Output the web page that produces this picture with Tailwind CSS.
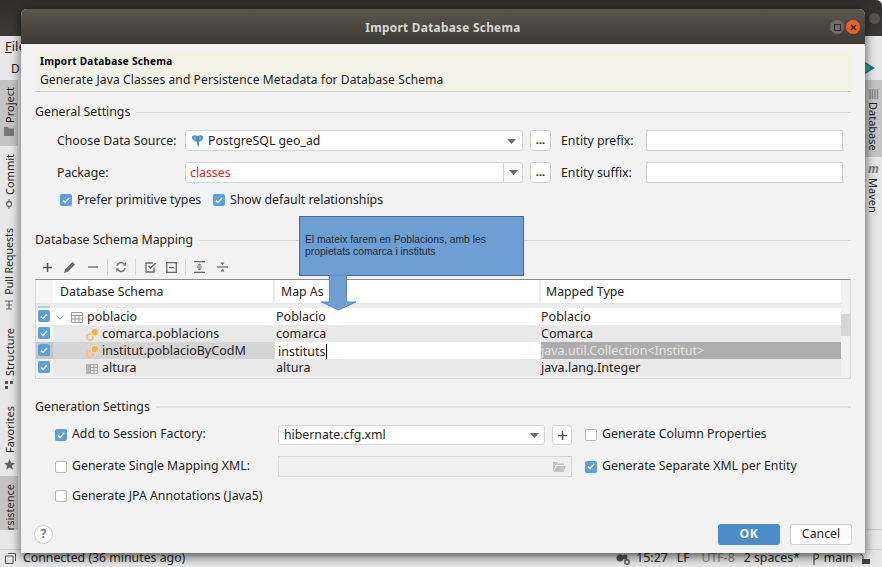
<!DOCTYPE html>
<html lang="en">
<head>
    <meta charset="UTF-8">
    <title>Import Database Schema</title>
    <script src="https://cdn.jsdelivr.net/npm/@tailwindcss/browser@4"></script>
</head>
<body class="bg-[#f2f2f2] overflow-hidden">
<div class="relative w-[882px] h-[567px] overflow-hidden font-['Noto_Sans',sans-serif] text-[12.3px] text-[#222] flex flex-col">

    <!-- IDE window behind the dialog -->
    <div class="h-[36px] bg-gradient-to-b from-[#2f2e2a] to-[#3c3b37] shrink-0 rounded-tr-[6px] flex justify-end items-start">
        <div class="mt-[13px] mr-[2px] w-[11px] h-[11px] rounded-full bg-[#55544f]"></div>
    </div>
    <div class="flex-1 flex min-h-0">
        <!-- left tool strip -->
        <div class="w-[18px] bg-[#e8e8e8] flex flex-col text-[11px] shrink-0">
            <div class="h-[24px] text-[13px] pl-[5px] pt-px whitespace-nowrap"><span class="underline">F</span>ile</div>
            <div class="h-[20px] pl-[11px] text-[12px]">D</div>
            <div class="h-[66px] bg-[#c4c4c4] flex flex-col items-center pt-[7px] gap-[4px]">
                <span class="[writing-mode:vertical-rl] rotate-180 leading-none">Project</span>
                <svg width="10" height="9" viewBox="0 0 10 9"><path d="M0 0h4l1 1.500h5V9H0z" fill="#777"/></svg>
            </div>
            <div class="h-[81px] flex flex-col items-center pt-[8px] gap-[4px]">
                <span class="[writing-mode:vertical-rl] rotate-180 leading-none">Commit</span>
                <svg width="10" height="10" viewBox="0 0 10 10"><circle cx="5" cy="5" r="2.500" fill="none" stroke="#666" stroke-width="1.300"/><path d="M5 0v2.500M5 7.500V10" stroke="#666"/></svg>
            </div>
            <div class="h-[98px] flex flex-col items-center pt-[1px] gap-[5px]">
                <span class="[writing-mode:vertical-rl] rotate-180 leading-none text-[10.600px]">Pull Requests</span>
                <svg width="10" height="10" viewBox="0 0 10 10"><path d="M1 1h8M5 1v8M2 5h6M2 9h6" stroke="#666" stroke-width="1.200"/></svg>
            </div>
            <div class="h-[78px] flex flex-col items-center pt-[3px] gap-[5px]">
                <span class="[writing-mode:vertical-rl] rotate-180 leading-none">Structure</span>
                <svg width="10" height="8" viewBox="0 0 10 8"><path d="M1 0h3v3H1zM6 0h3v3H6zM1 5h3v3H1z" fill="#555"/></svg>
            </div>
            <div class="h-[73px] flex flex-col items-center pt-[3px] gap-[6px]">
                <span class="[writing-mode:vertical-rl] rotate-180 leading-none">Favorites</span>
                <svg width="11" height="11" viewBox="0 0 11 11"><path d="M5.500 0l1.600 3.700 3.900.4-3 2.600.9 4-3.400-2.100L2.100 10.700l.9-4-3-2.600 3.900-.4z" fill="#666"/></svg>
            </div>
            <div class="h-[54px] bg-[#c4c4c4] flex flex-col justify-end items-center overflow-hidden">
                <span class="[writing-mode:vertical-rl] rotate-180 leading-none">rsistence</span>
            </div>
        </div>
        <div class="flex-1"></div>
        <!-- right tool strip -->
        <div class="w-[17px] bg-[#e8e8e8] flex flex-col text-[11px] shrink-0">
            <div class="h-[44px] flex items-end pb-[6px]">
                <svg width="10" height="12" viewBox="0 0 10 12"><path d="M0 0l10 6-10 6z" fill="#1c6fa8"/><path d="M0 0l5 6-5 6z" fill="#3fae6a"/></svg>
            </div>
            <div class="h-[77px] bg-[#c4c4c4] flex flex-col items-center pt-[9px] gap-[3px]">
                <svg width="10" height="10" viewBox="0 0 10 10"><path d="M1 0v10M3.500 0v10M6 0v10M8.500 0v10" stroke="#888" stroke-width="1.500"/></svg>
                <span class="[writing-mode:vertical-rl] leading-none">Database</span>
            </div>
            <div class="flex flex-col items-center pt-[6px] gap-[3px]">
                <span class="italic font-bold text-[12px] leading-none text-[#777]">m</span>
                <span class="[writing-mode:vertical-rl] leading-none">Maven</span>
            </div>
            <div class="mt-auto mb-[19px] h-px bg-[#cfcfcf]"></div>
        </div>
    </div>
    <!-- status bar -->
    <div class="h-[18px] bg-[#e8e8e8] border-t border-[#cfcfcf] shrink-0 flex items-center">
        <svg width="11" height="11" viewBox="0 0 11 11" class="ml-[5px] mr-[7px]"><path d="M3 .5h7.500v7.500M.5 3h7.500v7.500H.5z" fill="none" stroke="#555"/></svg>
        <span>Connected (36 minutes ago)</span>
        <div class="ml-auto flex items-center mr-[12px]">
            <svg width="14" height="12" viewBox="0 0 14 12"><circle cx="4" cy="5" r="3.500" fill="#555"/><circle cx="9" cy="4" r="2.500" fill="#555"/><circle cx="11" cy="9" r="2.200" fill="none" stroke="#555" stroke-width="1.400"/></svg>
            <span class="ml-[6px]">15:27</span>
            <span class="ml-[9px]">LF</span>
            <span class="ml-[12px] text-[#888]">UTF-8</span>
            <span class="ml-[9px]">2 spaces*</span>
            <svg width="8" height="12" viewBox="0 0 8 12" class="ml-[11px]"><path d="M3 12V1M3 1h2.500a2 2 0 0 1 0 4.500L3 7" fill="none" stroke="#555" stroke-width="1.200"/></svg>
            <span class="ml-[5px]">main</span>
            <svg width="10" height="10" viewBox="0 0 10 10" class="ml-[7px]"><path d="M2 5h8v5H2z" fill="#444"/><path d="M3 5V2.500a2 2 0 0 0-3-1.500" fill="none" stroke="#444"/></svg>
        </div>
    </div>

    <!-- dialog -->
    <div class="absolute left-[21px] top-[9px] w-[844px] h-[544px] bg-[#f2f2f2] rounded-t-[6px] shadow-[0_3px_11px_rgba(0,0,0,0.7)] flex flex-col">
        <div class="h-[35px] bg-gradient-to-b from-[#5a574e] to-[#3d3b36] rounded-t-[6px] relative flex items-center justify-center pt-[3px] shrink-0 border-b border-[#33322e]">
            <span class="text-[#d9d8d2] font-bold text-[11.800px] tracking-[0.3px]">Import Database Schema</span>
            <div class="absolute right-[5px] top-[11px] flex gap-[2px]">
                <div class="w-[14px] h-[14px] rounded-full bg-[#6e6d66] flex items-center justify-center"><div class="w-[7px] h-[7px] border border-[#2e2d2a]"></div></div>
                <div class="w-[14px] h-[14px] rounded-full bg-[#e9602c] text-[#3a2015] flex items-center justify-center">
                    <svg width="7" height="7" viewBox="0 0 7 7"><path d="M1 1l5 5M6 1L1 6" stroke="#402015" stroke-width="1.400"/></svg>
                </div>
            </div>
        </div>

        <div class="flex-1 flex flex-col px-[14px]">
            <!-- banner -->
            <div class="mt-[7px] h-[41px] bg-[#f2f2e6] border-b border-[#cfcfcf] px-[5px] pt-[4px] shrink-0">
                <div class="text-[10px] font-bold leading-[13px] tracking-[0.3px] text-black">Import Database Schema</div>
                <div class="mt-[2px] text-[12px] leading-[20px] tracking-[0.12px]">Generate Java Classes and Persistence Metadata for Database Schema</div>
            </div>

            <!-- general settings -->
            <div class="mt-[12px] h-[16px] flex items-center gap-[6px] shrink-0">
                <span>General Settings</span>
                <div class="flex-1 h-px bg-[#d8d8d8]"></div>
            </div>
            <div class="mt-[10px] h-[21px] flex items-center pl-[22px] shrink-0">
                <span class="w-[128px] pt-[2px]">Choose Data Source:</span>
                <div class="w-[338px] h-[21px] bg-white border border-[#d6d6d6] rounded-[3px] flex items-center pl-[6px] pr-[6px] pt-px">
                    <svg width="11" height="12" viewBox="0 0 11 12" class="mr-[5px]"><path d="M0 2.500C0 .5 2.500 0 3.500.5L5.500 1l2-.5c1-.5 3.500 0 3.500 2 0 2-1.500 3.500-2.500 4H7v4c0 1-1.200 1.500-1.500.5L5 6.500H3.500C2 6 0 4.500 0 2.500z" fill="#3d8fc4"/><path d="M3 1.500v4M8 1.500v4" stroke="#bfe0f5" stroke-width=".8"/></svg>
                    <span>PostgreSQL geo_ad</span>
                    <svg width="9" height="5" viewBox="0 0 9 5" class="ml-auto"><path d="M0 0h9L4.500 5z" fill="#6b6b6b"/></svg>
                </div>
                <div class="ml-[7px] w-[21px] h-[21px] bg-white border border-[#d0d0d0] rounded-[3px] flex items-center justify-center text-[11px] font-bold pb-[1px]">...</div>
                <span class="ml-[10px] w-[85px] pt-[2px]">Entity prefix:</span>
                <div class="w-[197px] h-[21px] bg-white border border-[#d0d0d0]"></div>
            </div>
            <div class="mt-[11px] h-[21px] flex items-center pl-[22px] shrink-0">
                <span class="w-[128px] pt-[2px]">Package:</span>
                <div class="w-[338px] h-[21px] bg-white border border-[#d6d6d6] rounded-[3px] flex items-center pl-[4px]">
                    <span class="text-[#e8212b] pt-px">classes</span>
                    <div class="ml-auto w-[19px] h-full border-l border-[#d6d6d6] bg-[#f8f8f8] rounded-r-[3px] flex items-center justify-center">
                        <svg width="9" height="5" viewBox="0 0 9 5"><path d="M0 0h9L4.500 5z" fill="#6b6b6b"/></svg>
                    </div>
                </div>
                <div class="ml-[7px] w-[21px] h-[21px] bg-white border border-[#d0d0d0] rounded-[3px] flex items-center justify-center text-[11px] font-bold pb-[1px]">...</div>
                <span class="ml-[10px] w-[85px] pt-[2px]">Entity suffix:</span>
                <div class="w-[197px] h-[21px] bg-white border border-[#d0d0d0]"></div>
            </div>
            <div class="mt-[9px] h-[16px] flex items-center pl-[25px] shrink-0">
                <div class="w-[12px] h-[12px] rounded-[2px] bg-[#5b9fdf] flex items-center justify-center"><svg width="8" height="7" viewBox="0 0 8 7"><path d="M1 3.500l2 2L7 1" fill="none" stroke="#fff" stroke-width="1.500"/></svg></div>
                <span class="ml-[5px] w-[136px]">Prefer primitive types</span>
                <div class="w-[12px] h-[12px] rounded-[2px] bg-[#5b9fdf] flex items-center justify-center"><svg width="8" height="7" viewBox="0 0 8 7"><path d="M1 3.500l2 2L7 1" fill="none" stroke="#fff" stroke-width="1.500"/></svg></div>
                <span class="ml-[5px]">Show default relationships</span>
            </div>

            <!-- mapping -->
            <div class="mt-[24px] h-[16px] flex items-center gap-[6px] shrink-0">
                <span>Database Schema Mapping</span>
                <div class="flex-1 h-px bg-[#d8d8d8]"></div>
            </div>
            <div class="mt-[10px] h-[18px] flex items-center pl-[7px] shrink-0">
                <svg width="11" height="11" viewBox="0 0 11 11"><path d="M5.500 1v9M1 5.500h9" stroke="#555" stroke-width="1.500"/></svg>
                <svg width="12" height="12" viewBox="0 0 12 12" class="ml-[11px]"><path d="M0 12l1-3.500L8.500 1 11 3.500 3.500 11z" fill="#666"/></svg>
                <svg width="10" height="2" viewBox="0 0 10 2" class="ml-[12px]"><path d="M0 1h10" stroke="#666" stroke-width="1.300"/></svg>
                <div class="ml-[9px] w-px h-[16px] bg-[#d4d4d4]"></div>
                <svg width="12" height="12" viewBox="0 0 12 12" class="ml-[7px]"><path d="M2 5a4 4 0 0 1 7-2M10 7a4 4 0 0 1-7 2" fill="none" stroke="#777" stroke-width="1.600"/><path d="M7.500 4.500H11V1zM4.500 7.500H1V11z" fill="#777"/></svg>
                <div class="ml-[8px] w-px h-[16px] bg-[#d4d4d4]"></div>
                <svg width="12" height="11" viewBox="0 0 12 11" class="ml-[9px]"><path d="M9 5.500V10H1V1h7" fill="none" stroke="#666" stroke-width="1.300"/><path d="M3.500 4l2 2L11 1" fill="none" stroke="#666" stroke-width="1.300"/></svg>
                <svg width="11" height="11" viewBox="0 0 11 11" class="ml-[9px]"><path d="M.7.700h9.600v9.600H.7z" fill="none" stroke="#666" stroke-width="1.300"/><path d="M3 5.500h5" stroke="#666" stroke-width="1.300"/></svg>
                <div class="ml-[8px] w-px h-[16px] bg-[#d4d4d4]"></div>
                <svg width="11" height="12" viewBox="0 0 11 12" class="ml-[8px]"><path d="M0 .7h11M0 11.300h11M3 6h5" stroke="#666" stroke-width="1.200"/><path d="M5.500 2.500L7.500 4.500h-4zM5.500 9.500L3.500 7.500h4z" fill="#666"/></svg>
                <svg width="11" height="12" viewBox="0 0 11 12" class="ml-[12px]"><path d="M0 6h11" stroke="#666" stroke-width="1.200"/><path d="M5.500 4.500L3.500 1.500h4zM5.500 7.500L7.500 10.500h-4z" fill="#666"/></svg>
            </div>

            <!-- table -->
            <div class="mt-[3px] h-[100px] border border-[#d8d8d8] border-t-[#8c8c8c] flex shrink-0 text-[12.500px]">
                <div class="flex-1 min-w-0 flex flex-col">
                    <div class="h-[24px] flex bg-white border-b border-[#e8e8e8] text-[12.300px] shrink-0 [&>div]:pt-[2px]">
                        <div class="w-[17px] bg-[#f5f5f5]"></div>
                        <div class="w-[222px] flex items-center pl-[7px] border-r-2 border-[#ececec]">Database Schema</div>
                        <div class="w-[266px] flex items-center pl-[6px] border-r-2 border-[#ececec]">Map As</div>
                        <div class="flex-1 flex items-center pl-[5px]">Mapped Type</div>
                    </div>
                    <div class="h-[4px] bg-[#ececec] shrink-0 pl-[2px]"><div class="w-[12px] h-[2px] mt-[2px] bg-[#a8c9ea]"></div></div>
                    <div class="h-[17px] flex bg-white shrink-0 [&>div]:pt-[2px]">
                        <div class="w-[17px] pl-[2px]"><div class="w-[12px] h-[12px] rounded-[2px] bg-[#5b9fdf] flex items-center justify-center"><svg width="8" height="7" viewBox="0 0 8 7"><path d="M1 3.500l2 2L7 1" fill="none" stroke="#fff" stroke-width="1.500"/></svg></div></div>
                        <div class="w-[222px] flex items-center">
                            <svg width="8" height="5" viewBox="0 0 8 5" class="ml-[3px]"><path d="M.5.500L4 4 7.500.500" fill="none" stroke="#888"/></svg>
                            <svg width="12" height="11" viewBox="0 0 12 11" class="ml-[7px]"><path d="M.5.500h11v10H.5zM.5 3.500h11M.5 7h11M4 3.500v7M8 3.500v7" fill="none" stroke="#9a9a9a"/></svg>
                            <span class="ml-[4px]">poblacio</span>
                        </div>
                        <div class="w-[266px] flex items-center pl-[1px]">Poblacio</div>
                        <div class="flex-1 flex items-center">Poblacio</div>
                    </div>
                    <div class="h-[17px] flex bg-[#e9e9e9] shrink-0 [&>div]:pt-[2px]">
                        <div class="w-[17px] bg-[#f2f2f2] pl-[2px]"><div class="w-[12px] h-[12px] rounded-[2px] bg-[#5b9fdf] flex items-center justify-center"><svg width="8" height="7" viewBox="0 0 8 7"><path d="M1 3.500l2 2L7 1" fill="none" stroke="#fff" stroke-width="1.500"/></svg></div></div>
                        <div class="w-[222px] flex items-center pl-[33px]">
                            <svg width="13" height="13" viewBox="0 0 13 13"><circle cx="4" cy="9" r="3.100" fill="none" stroke="#f5c47a" stroke-width="1.900"/><circle cx="8.800" cy="4.200" r="3.800" fill="#f2b04e" stroke="#f4f4f4" stroke-width=".7"/></svg>
                            <span class="ml-[3px]">comarca.poblacions</span>
                        </div>
                        <div class="w-[266px] flex items-center pl-[1px]">comarca</div>
                        <div class="flex-1 flex items-center">Comarca</div>
                    </div>
                    <div class="h-[17px] flex bg-[#d4d4d4] shrink-0 [&>div]:pt-[2px]">
                        <div class="w-[17px] bg-[#c6c6c6] pl-[2px]"><div class="w-[12px] h-[12px] rounded-[2px] bg-[#5b9fdf] flex items-center justify-center"><svg width="8" height="7" viewBox="0 0 8 7"><path d="M1 3.500l2 2L7 1" fill="none" stroke="#fff" stroke-width="1.500"/></svg></div></div>
                        <div class="w-[222px] flex items-center pl-[33px]">
                            <svg width="13" height="13" viewBox="0 0 13 13"><circle cx="4" cy="9" r="3.100" fill="none" stroke="#f5c47a" stroke-width="1.900"/><circle cx="8.800" cy="4.200" r="3.800" fill="#f2b04e" stroke="#f4f4f4" stroke-width=".7"/></svg>
                            <span class="ml-[3px]">institut.poblacioByCodM</span>
                        </div>
                        <div class="w-[266px] flex items-center pl-[3px] bg-white"><span class="border-r border-black leading-[15px] pr-px">instituts</span></div>
                        <div class="flex-1 flex items-center bg-[#adadad] text-[#e4e4e4]">java.util.Collection&lt;Institut&gt;</div>
                    </div>
                    <div class="h-[17px] flex bg-[#e9e9e9] shrink-0 [&>div]:pt-[2px]">
                        <div class="w-[17px] bg-[#f2f2f2] pl-[2px]"><div class="w-[12px] h-[12px] rounded-[2px] bg-[#5b9fdf] flex items-center justify-center"><svg width="8" height="7" viewBox="0 0 8 7"><path d="M1 3.500l2 2L7 1" fill="none" stroke="#fff" stroke-width="1.500"/></svg></div></div>
                        <div class="w-[222px] flex items-center pl-[33px]">
                            <svg width="12" height="10" viewBox="0 0 12 10"><path d="M0 0h4v10H0z" fill="#b5b5b5"/><path d="M4.500.500h7v9h-7zM4.500 3.500h7M4.500 6.500h7M8 .500v9" fill="none" stroke="#a5a5a5"/></svg>
                            <span class="ml-[4px]">altura</span>
                        </div>
                        <div class="w-[266px] flex items-center pl-[1px]">altura</div>
                        <div class="flex-1 flex items-center">java.lang.Integer</div>
                    </div>
                </div>
                <div class="w-[9px] bg-[#f2f2f2] pt-[34px] shrink-0"><div class="h-[22px] bg-[#d6d6d6]"></div></div>
            </div>

            <!-- generation settings -->
            <div class="mt-[20px] h-[16px] flex items-center gap-[6px] shrink-0">
                <span>Generation Settings</span>
                <div class="flex-1 h-[2px] bg-[#e0e0e0]"></div>
            </div>
            <div class="mt-[10px] h-[20px] flex items-center pl-[20px] shrink-0">
                <div class="w-[12px] h-[12px] rounded-[2px] bg-[#5b9fdf] flex items-center justify-center"><svg width="8" height="7" viewBox="0 0 8 7"><path d="M1 3.500l2 2L7 1" fill="none" stroke="#fff" stroke-width="1.500"/></svg></div>
                <span class="ml-[5px] w-[206px] pb-[2px]">Add to Session Factory:</span>
                <div class="w-[267px] h-[20px] bg-white border border-[#d6d6d6] rounded-[3px] flex items-center px-[5px]">
                    <span>hibernate.cfg.xml</span>
                    <svg width="9" height="5" viewBox="0 0 9 5" class="ml-auto"><path d="M0 0h9L4.500 5z" fill="#6b6b6b"/></svg>
                </div>
                <div class="ml-[7px] w-[20px] h-[20px] bg-white border border-[#d6d6d6] rounded-[3px] flex items-center justify-center"><svg width="9" height="9" viewBox="0 0 9 9"><path d="M4.500 0v9M0 4.500h9" stroke="#555" stroke-width="1.500"/></svg></div>
                <div class="ml-[13px] w-[12px] h-[12px] rounded-[2px] bg-white border border-[#b8b8b8]"></div>
                <span class="ml-[5px] pb-[2px]">Generate Column Properties</span>
            </div>
            <div class="mt-[11px] h-[21px] flex items-center pl-[20px] shrink-0">
                <div class="w-[12px] h-[12px] rounded-[2px] bg-white border border-[#b8b8b8]"></div>
                <span class="ml-[5px] w-[206px]">Generate Single Mapping XML:</span>
                <div class="w-[294px] h-[21px] bg-[#f0f0f0] border border-[#d8d8d8] flex items-center justify-end pr-[5px]">
                    <svg width="13" height="10" viewBox="0 0 13 10"><path d="M0 0h4l1 1.500h6V3H3L0 10zM3.500 4H13l-2.500 6H1z" fill="#c4c4c4"/></svg>
                </div>
                <div class="ml-[13px] w-[12px] h-[12px] rounded-[2px] bg-[#5b9fdf] flex items-center justify-center"><svg width="8" height="7" viewBox="0 0 8 7"><path d="M1 3.500l2 2L7 1" fill="none" stroke="#fff" stroke-width="1.500"/></svg></div>
                <span class="ml-[5px]">Generate Separate XML per Entity</span>
            </div>
            <div class="mt-[11px] h-[16px] flex items-center pl-[20px] shrink-0">
                <div class="w-[12px] h-[12px] rounded-[2px] bg-white border border-[#b8b8b8]"></div>
                <span class="ml-[5px]">Generate JPA Annotations (Java5)</span>
            </div>

            <!-- footer -->
            <div class="mt-[19px] h-[22px] flex items-center shrink-0 -ml-[1px]">
                <div class="w-[19px] h-[19px] rounded-full bg-white border border-[#d0d0d0] flex items-center justify-center text-[12px] font-bold text-[#777]">?</div>
                <div class="ml-auto w-[62px] h-[21px] bg-[#4d8ccb] rounded-[3px] flex items-center justify-center text-[#eef4fa] font-bold tracking-[0.5px]">OK</div>
                <div class="ml-[10px] mr-[-1px] w-[62px] h-[21px] bg-white border border-[#d0d0d0] rounded-[3px] flex items-center justify-center">Cancel</div>
            </div>
        </div>
    </div>

    <!-- callout over the table -->
    <div class="absolute left-[299px] top-[216px] w-[225px] h-[60px] bg-[#6f9fd2] border border-[#41689a] px-[5px] pt-[17px] font-['Liberation_Sans',sans-serif] text-[10.300px] leading-[12px] text-[#1b2a3c] whitespace-nowrap">
        El mateix farem en Poblacions, amb les<br>propietats comarca i instituts
    </div>
    <svg class="absolute left-[321px] top-[275px]" width="36" height="36" viewBox="0 0 36 36"><path d="M8.500 0h17v27h9.500L17.500 35 .5 27h8z" fill="#6f9fd2" stroke="#5b8abf"/></svg>
</div>
</body>
</html>
